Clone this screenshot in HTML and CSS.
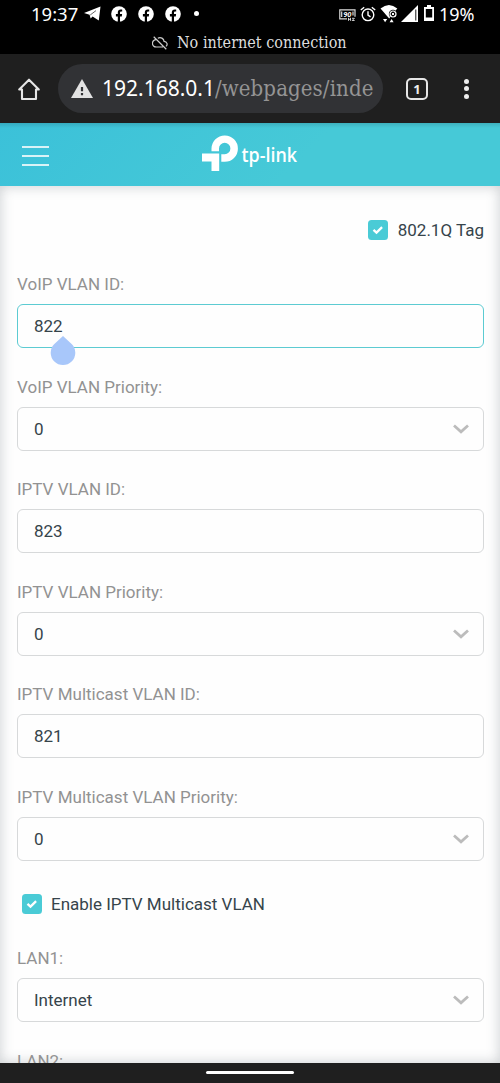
FILE: index.html
```html
<!DOCTYPE html>
<html lang="en">
<head>
<meta charset="utf-8">
<title>TP-Link IPTV settings</title>
<link rel="stylesheet" href="styles.css">
</head>
<body>
<svg width="0" height="0" class="defs">
  <symbol id="fb" viewBox="0 0 16 16"><circle cx="8" cy="8" r="7.8" fill="#fff"/><path d="M6.8 16v-5.6H4.9V8.1h1.9V6.4c0-2 1.1-3 2.9-3 .8 0 1.5.1 1.5.1v1.9h-1c-.9 0-1.2.6-1.2 1.2v1.5h2.1l-.3 2.3H9V16z" fill="#000"/></symbol>
  <symbol id="chev" viewBox="0 0 18 12"><path d="M2 2.5l7 6.3 7-6.3" fill="none" stroke="#bcbcbc" stroke-width="2.8"/></symbol>
  <symbol id="tick" viewBox="0 0 20 20"><path d="M5.5 9.8l3 2.8 5.6-5.5" fill="none" stroke="#fff" stroke-width="2.3"/></symbol>
</svg>
<div class="phone">
  <header class="status">
    <div class="status-row">
      <span class="clock">19:37</span>
      <svg class="telegram" width="17" height="15" viewBox="0 0 17 15"><path d="M0 7L16.5.5 14.8 14.5 8.6 10.6 6.6 12.6 5.6 8.8z" fill="#fff"/><path d="M6.2 9l5.8-4.4" fill="none" stroke="#000" stroke-width=".6"/></svg>
      <span class="notifs"><svg width="16" height="16"><use href="#fb"/></svg><svg width="16" height="16"><use href="#fb"/></svg><svg width="16" height="16"><use href="#fb"/></svg></span>
      <span class="dot"></span>
      <span class="system">
        <svg class="hz" width="17" height="13" viewBox="0 0 17 13"><path d="M3 1.8H.8v9H8M3 1.8h13v7M2.7 3.6v5.5M14 3.6v4" fill="none" stroke="#ddd" stroke-width="1.2"/><text x="4.2" y="8.8" class="hz-num">90</text><path d="M9.5 9.8v3M11.5 9.8v3M9.5 11.3h2M13 10.3h2.4l-2.2 2.2h2.4" fill="none" stroke="#fff" stroke-width=".8"/></svg>
        <svg class="alarm" width="16" height="16" viewBox="0 0 16 16" fill="none" stroke="#fff" stroke-width="1.4"><circle cx="8" cy="8.8" r="5.8"/><path d="M8 5.2v4l2.5 1.6M.8 4L4.2 1.2M15.2 4l-3.4-2.8"/></svg>
        <svg class="wifi" width="18" height="20" viewBox="0 0 18 20"><path d="M.5 4.5Q9-2.7 17.3 4.5L9.2 14.5z" fill="#fff"/><circle cx="13" cy="10" r="4.2" fill="#000"/><circle cx="13" cy="10" r="3" fill="none" stroke="#fff" stroke-width="1.2"/><path d="M11.7 8.7l2.6 2.6m0-2.6l-2.6 2.6" stroke="#fff"/><path d="M3 15h4.2l-2.1 3.2zM9.6 18.2h4l-2-3.2z" fill="#fff"/></svg>
        <svg class="signal" width="17" height="17" viewBox="0 0 17 17"><path d="M0 17L17 0v17z" fill="#fff"/><path d="M14.8 4.5v11" stroke="#000" stroke-width=".9"/></svg>
        <svg class="battery" width="10" height="16" viewBox="0 0 10 16"><path d="M0 2h3V0h4v2h3v14H0z" fill="#fff"/><path d="M1.8 4h6.4v8.5H1.8z" fill="#000"/></svg>
        <span class="percent">19%</span>
      </span>
    </div>
    <div class="offline">
      <svg width="16" height="14" viewBox="0 0 16 14" fill="none" stroke="#ccc" stroke-width="1.2"><path d="M4.1 3.6A3.6 3.6 0 0 0 4.2 11H11M5.8 2.2c3-1.5 6 .3 6.3 3.2 3 .2 4 3.3 1.8 5M1.7.8l12.6 12.4"/></svg>
      <span>No internet connection</span>
    </div>
  </header>

  <nav class="browser">
    <svg class="home" width="24" height="24" viewBox="0 0 24 24"><path d="M2.2 12.5L12 2.7l9.8 9.8H19V22H5v-9.5z" fill="none" stroke="#e6e6e6" stroke-width="2.1" stroke-linejoin="round"/></svg>
    <div class="address">
      <svg width="22" height="19" viewBox="0 0 22 19"><path d="M11 0l11 19H0z" fill="#e2e2e2"/><path d="M11 8v4.2M11 14v2.3" stroke="#313235" stroke-width="2.2"/></svg>
      <span class="host">192.168.0.1</span><span class="path">/webpages/inde</span>
    </div>
    <span class="tabs">1</span>
    <span class="more"><i></i><i></i><i></i></span>
  </nav>

  <div class="brandbar">
    <span class="menu"><i></i><i></i><i></i></span>
    <svg class="logo" width="98" height="38" viewBox="0 0 98 38">
      <path d="M9.5 16.3V13.5a13.2 13.2 0 1 1 13.2 13.3h-3.4v-7.6h3.4A5.7 5.7 0 1 0 17 13.5v2.8z" fill="#fff"/>
      <path d="M0 18.5h17.2V36H9.5v-9.5H0z" fill="#fff"/>
      <text x="39.5" y="26.5" class="logo-text" textLength="55.5" lengthAdjust="spacingAndGlyphs">tp-link</text>
    </svg>
  </div>

  <main class="page">
    <div class="check check-right"><svg class="box"><use href="#tick"/></svg><span>802.1Q Tag</span></div>
    <div class="field"><label>VoIP VLAN ID:</label><div class="input focus"><span>822</span>
      <svg class="handle" width="26" height="30" viewBox="0 0 26 30"><path d="M13 0l8.9 8.2a12.3 12.3 0 1 1-17.8 0z" fill="#a8c7fa"/></svg></div></div>
    <div class="field"><label>VoIP VLAN Priority:</label><div class="input"><span>0</span><svg class="chev"><use href="#chev"/></svg></div></div>
    <div class="field"><label>IPTV VLAN ID:</label><div class="input"><span>823</span></div></div>
    <div class="field"><label>IPTV VLAN Priority:</label><div class="input"><span>0</span><svg class="chev"><use href="#chev"/></svg></div></div>
    <div class="field"><label>IPTV Multicast VLAN ID:</label><div class="input"><span>821</span></div></div>
    <div class="field"><label>IPTV Multicast VLAN Priority:</label><div class="input"><span>0</span><svg class="chev"><use href="#chev"/></svg></div></div>
    <div class="check check-left"><svg class="box"><use href="#tick"/></svg><span>Enable IPTV Multicast VLAN</span></div>
    <div class="field"><label>LAN1:</label><div class="input"><span>Internet</span><svg class="chev"><use href="#chev"/></svg></div></div>
    <div class="field"><label>LAN2:</label></div>
  </main>

  <footer class="gesture"><i></i></footer>
</div>
</body>
</html>
```
FILE: styles.css
```css
* { box-sizing: border-box; }
body { margin: 0; background: #000; font-family: Roboto, sans-serif; }
svg { display: block; flex: none; }
.defs { position: absolute; }
.phone { width: 500px; height: 1083px; display: flex; flex-direction: column; overflow: hidden; }

.status { height: 54px; flex: none; background: #000; color: #fff; }
.status-row { display: flex; align-items: center; height: 28px; padding: 0 25px 0 31px; }
.clock { width: 53px; font: 18.5px/28px "Noto Sans", sans-serif; }
.telegram { margin-bottom: 1px; }
.notifs { display: flex; gap: 11px; margin: 0 0 1px 10px; }
.dot { width: 5px; height: 5px; border-radius: 50%; background: #fff; margin: 0 0 2px 13px; }
.system { display: flex; align-items: center; width: 136px; margin-left: auto; }
.hz-num { font: italic bold 7.5px Roboto, sans-serif; fill: #fff; }
.alarm { margin-left: 4px; }
.wifi { margin: 0 0 0 4px; }
.signal { margin: 0 0 1px 3px; }
.battery { margin: 0 0 2px 6px; }
.percent { margin-left: 5px; font: 18px/28px "Noto Sans", sans-serif; }
.offline { display: flex; align-items: center; gap: 9px; height: 26px; padding: 3px 0 0 152px; color: #ddd; font: 16px/24px "DejaVu Serif Condensed", "DejaVu Serif", serif; font-stretch: condensed; white-space: nowrap; }
.offline span { letter-spacing: .02px; }

.browser { height: 69px; flex: none; display: flex; align-items: center; padding-left: 17px; background: #1f1f1f; }
.address { display: flex; align-items: center; width: 325px; height: 49px; margin-left: 17px; padding-left: 13px; border-radius: 25px; background: #313235; overflow: hidden; white-space: nowrap; }
.host { margin-left: 9px; font: 21px/49px "Noto Sans", sans-serif; color: #fff; }
.path { width: 160px; overflow: hidden; font: 22px/49px "DejaVu Serif Condensed", "DejaVu Serif", serif; font-stretch: condensed; letter-spacing: .1px; color: #949494; }
.tabs { width: 22px; height: 22px; margin-left: 23px; border: 2px solid #e6e6e6; border-radius: 5px; color: #eee; font: bold 13px/18px "Noto Sans", sans-serif; text-align: center; }
.more { display: flex; flex-direction: column; gap: 2.5px; margin-left: 35.5px; }
.more i { width: 5px; height: 5px; border-radius: 50%; background: #eee; }

.brandbar { height: 63px; flex: none; display: flex; align-items: center; padding-left: 22px; background: linear-gradient(to bottom, rgba(0,0,0,.12), transparent 5px), linear-gradient(135deg, #3bc1d9, #46c9d7 60%); }
.menu { display: flex; flex-direction: column; gap: 7px; width: 27px; padding-top: 3px; }
.menu i { height: 2px; background: #d9f3f7; }
.logo { margin: 0 0 2px 153px; }
.logo-text { font: 600 19.5px "Open Sans", sans-serif; fill: #fff; }

.page { flex: 1; min-height: 0; overflow: hidden; padding: 32.4px 16px 0 17px; background: #fefefe; box-shadow: inset 0 0 13px rgba(70,80,90,.28); }
.check { display: flex; align-items: center; height: 24px; color: #36444b; font-size: 17px; white-space: nowrap; }
.box { width: 20px; height: 20px; border-radius: 3.5px; background: #4acbd6; margin-right: 9.5px; }
.check-right { justify-content: flex-end; margin-bottom: 30px; }
.check-left { margin: 31.4px 0 30px 4.5px; }
.field { margin-bottom: 26.5px; }
.field label { display: block; height: 24px; margin-bottom: 8px; color: #929292; font-size: 17px; line-height: 24px; white-space: nowrap; }
.input { display: flex; align-items: center; justify-content: space-between; height: 44px; padding: 0 13px 0 16px; border: 1px solid #d7d9da; border-radius: 6px; color: #36444b; font-size: 17px; }
.focus { position: relative; border-color: #5ccbd2; }
.handle { position: absolute; left: 32px; top: 31px; }
.chev { width: 18px; height: 12px; }

.gesture { height: 20px; flex: none; display: flex; justify-content: center; padding-top: 8px; background: #1f1f1f; }
.gesture i { width: 88px; height: 3px; border-radius: 2px; background: #fff; }
```
